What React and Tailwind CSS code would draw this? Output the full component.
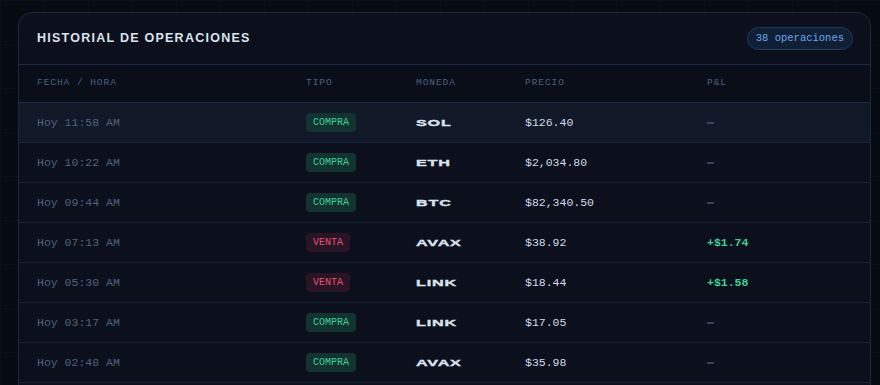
const ops = [
  { time: 'Hoy 11:58 AM', type: 'COMPRA', coin: 'SOL', price: '$126.40', pnl: null },
  { time: 'Hoy 10:22 AM', type: 'COMPRA', coin: 'ETH', price: '$2,034.80', pnl: null },
  { time: 'Hoy 09:44 AM', type: 'COMPRA', coin: 'BTC', price: '$82,340.50', pnl: null },
  { time: 'Hoy 07:13 AM', type: 'VENTA', coin: 'AVAX', price: '$38.92', pnl: '+$1.74' },
  { time: 'Hoy 05:30 AM', type: 'VENTA', coin: 'LINK', price: '$18.44', pnl: '+$1.58' },
  { time: 'Hoy 03:17 AM', type: 'COMPRA', coin: 'LINK', price: '$17.05', pnl: null },
  { time: 'Hoy 02:48 AM', type: 'COMPRA', coin: 'AVAX', price: '$35.98', pnl: null },
];

const mono = "font-['Liberation_Mono','DejaVu_Sans_Mono',monospace]";
const wide = "font-['Liberation_Sans',Arial,sans-serif]";

const App = () => {
  return (
    <div className="w-[880px] h-[385px] overflow-hidden bg-[#060a11] bg-[linear-gradient(rgba(40,60,90,0.12)_1px,transparent_1px),linear-gradient(90deg,rgba(40,60,90,0.12)_1px,transparent_1px)] bg-[size:44px_44px] pt-3 pl-[18px] pr-[9px]">
      <div className="bg-[#0b101c] border border-[#1b2a42] rounded-[14px] overflow-hidden">

        {/* Header */}
        <div className="h-[52px] flex items-center justify-between pl-[18px] pr-[17px] border-b border-[#1b2a42]">
          <h1 className={`${wide} text-[12.5px] font-bold tracking-[0.1em] text-[#dbe3ef]`}>
            HISTORIAL DE OPERACIONES
          </h1>
          <span className={`${mono} text-[10.5px] text-[#6aa7e8] bg-[#101f36] border border-[#1f3a5e] rounded-full h-[23px] px-[8px] flex items-center`}>
            38 operaciones
          </span>
        </div>

        {/* Column headers */}
        <div className={`${mono} h-[38px] flex items-center bg-[#090e18] border-b border-[#1b2a42] text-[9.5px] tracking-[0.1em] text-[#4d6180] pl-[18px]`}>
          <div className="w-[269px]">FECHA / HORA</div>
          <div className="w-[110px]">TIPO</div>
          <div className="w-[109px]">MONEDA</div>
          <div className="w-[182px]">PRECIO</div>
          <div>P&amp;L</div>
        </div>

        {/* Rows */}
        {ops.map((op, i) => (
          <div
            key={i}
            className={`h-[40px] flex items-center border-b border-[#17243a] pl-[18px] ${i === 0 ? 'bg-[#111827]' : ''}`}
          >
            <div className={`${mono} w-[269px] text-[11.5px] text-[#4f6380]`}>{op.time}</div>
            <div className="w-[110px] flex items-center">
              <span
                className={`${mono} flex items-center h-[19px] px-[7px] rounded-[4px] text-[10px] ${
                  op.type === 'COMPRA'
                    ? 'bg-[#133330] text-[#3fd19a]'
                    : 'bg-[#2a1526] text-[#e4506c]'
                }`}
              >
                {op.type}
              </span>
            </div>
            <div className="w-[109px] flex items-center">
              <span className={`${wide} block origin-left [transform:scaleX(1.7)] [-webkit-text-stroke:0.35px_#dbe3ef] text-[9.5px] leading-none font-bold tracking-[0.05em] text-[#dbe3ef]`}>
                {op.coin}
              </span>
            </div>
            <div className={`${mono} w-[182px] text-[11.5px] text-[#d3dcea]`}>{op.price}</div>
            <div className={`${mono} text-[11.5px] flex items-center`}>
              {op.pnl ? (
                <span className="font-bold text-[#3fd19a]">{op.pnl}</span>
              ) : (
                <span className="block w-[7px] h-[2px] bg-[#33445c]" />
              )}
            </div>
          </div>
        ))}
        <div className="h-[30px]" />
      </div>
    </div>
  );
};

export default App;
